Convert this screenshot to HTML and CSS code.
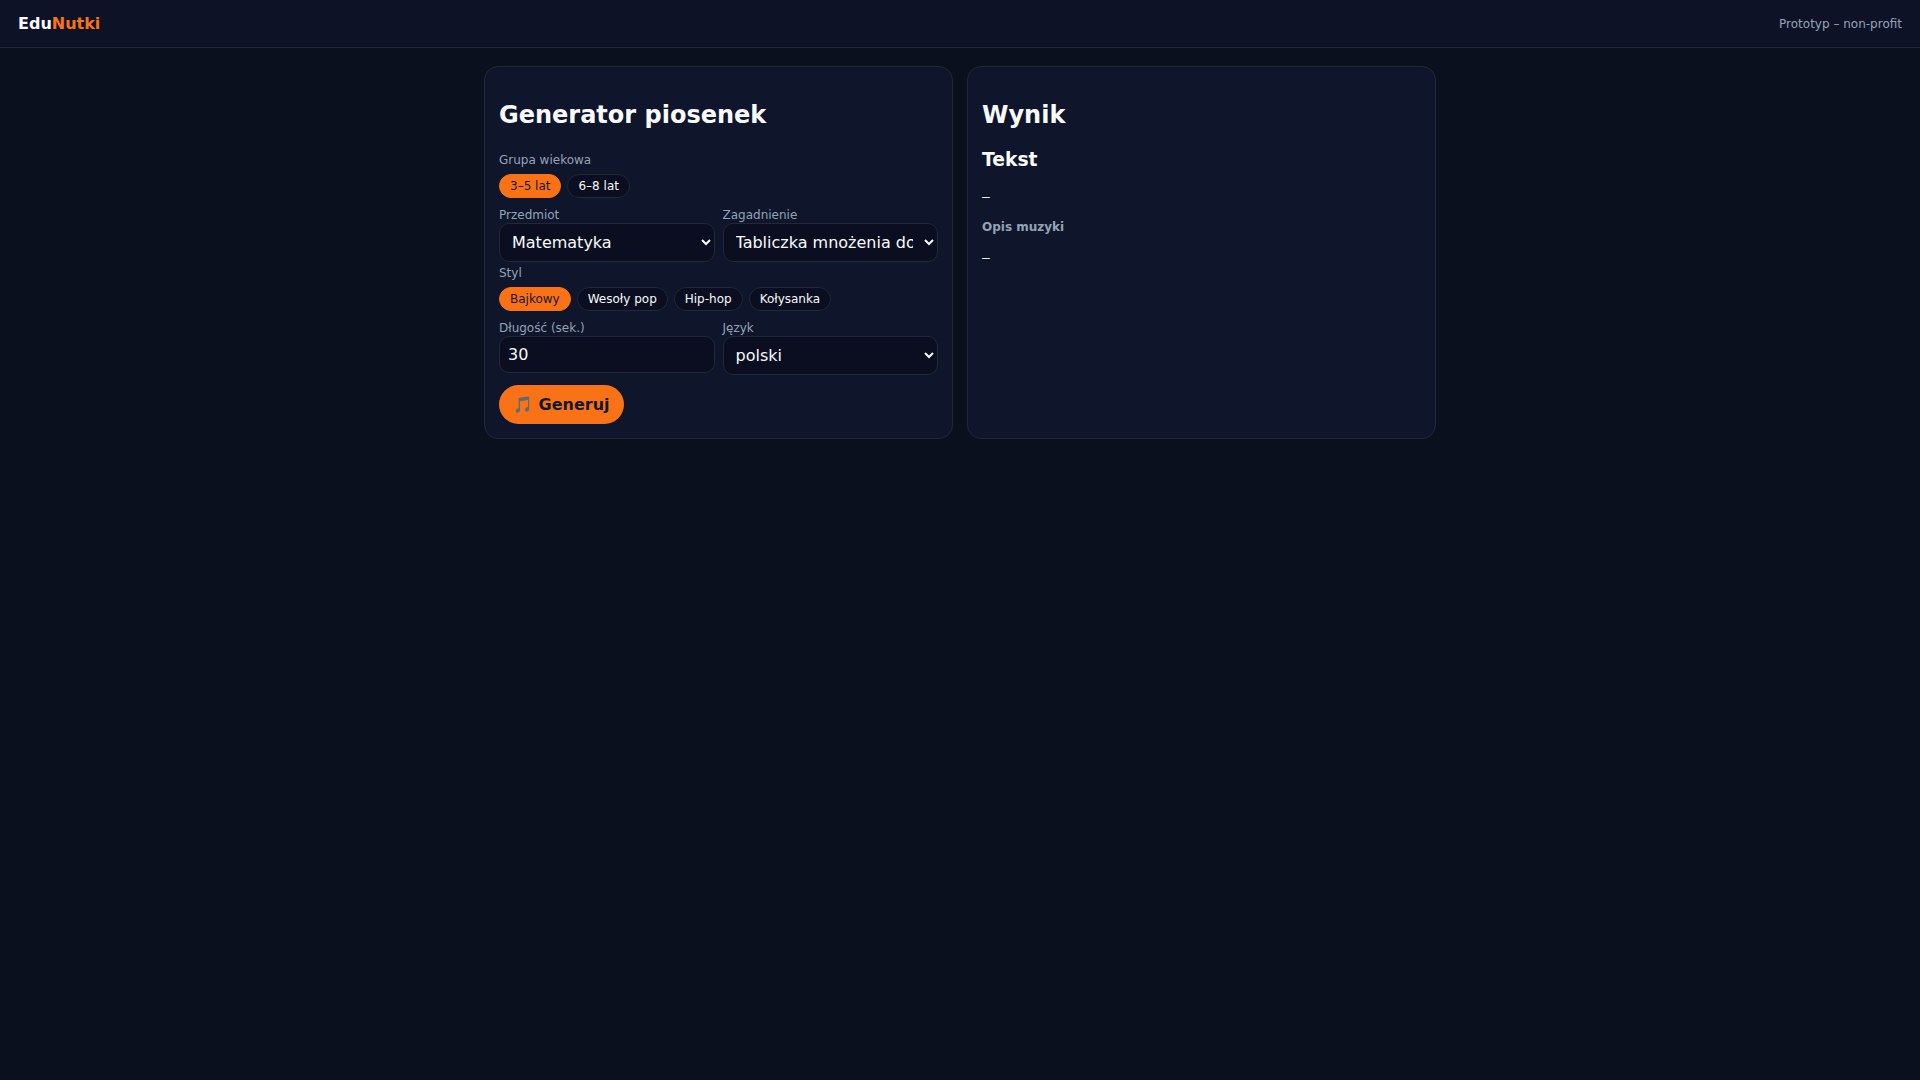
FILE: index.html
```html
<!DOCTYPE html>
<html lang="pl">
<head>
    <meta charset="UTF-8">
    <meta name="viewport" content="width=device-width, initial-scale=1.0">
    <title>EduNutki</title>
    <link rel="stylesheet" href="styles.css">
</head>
<body>
    <header>
        <div class="brand">Edu<span>Nutki</span></div>
        <div class="small">Prototyp – non-profit</div>
    </header>

    <main>
        <section class="card">
            <h2>Generator piosenek</h2>

            <div><span class="small" id="ageLabel">Grupa wiekowa</span></div>
            <div class="chips" id="age" role="group" aria-labelledby="ageLabel">
                <button type="button" class="chip active">3–5 lat</button>
                <button type="button" class="chip">6–8 lat</button>
            </div>

            <div class="row">
                <div class="field">
                    <label class="small" for="subject">Przedmiot</label>
                    <select id="subject">
                        <option>Matematyka</option>
                        <option>Przyroda</option>
                    </select>
                </div>
                <div class="field">
                    <label class="small" for="topic">Zagadnienie</label>
                    <select id="topic">
                        <option>Tabliczka mnożenia do 100</option>
                        <option>Dodawanie do 20</option>
                    </select>
                </div>
            </div>

            <div><span class="small" id="styleLabel">Styl</span></div>
            <div class="chips" id="style" role="group" aria-labelledby="styleLabel">
                <button type="button" class="chip active">Bajkowy</button>
                <button type="button" class="chip">Wesoły pop</button>
                <button type="button" class="chip">Hip-hop</button>
                <button type="button" class="chip">Kołysanka</button>
            </div>

            <div class="row">
                <div class="field">
                    <label class="small" for="length">Długość (sek.)</label>
                    <input type="number" id="length" value="30">
                </div>
                <div class="field">
                    <label class="small" for="lang">Język</label>
                    <select id="lang">
                        <option>polski</option>
                        <option>angielski</option>
                    </select>
                </div>
            </div>

            <button type="button" class="btn" id="generate">🎵 Generuj</button>
        </section>

        <section class="card">
            <h2>Wynik</h2>
            <h3>Tekst</h3>
            <pre id="lyrics">—</pre>
            <h4 class="small">Opis muzyki</h4>
            <pre id="music">—</pre>
        </section>
    </main>

    <script>
        // One active chip in each group
        document.querySelectorAll('.chips').forEach(group => {
            group.addEventListener('click', e => {
                if (!e.target.classList.contains('chip')) return;
                group.querySelectorAll('.chip').forEach(c => c.classList.remove('active'));
                e.target.classList.add('active');
            });
        });
    </script>
</body>
</html>
```
FILE: styles.css
```css
:root {
    --bg: #0a101e;
    --card: #0f152a;
    --field: #0a0e20;
    --line: #1f2937;
    --text: #f8fafc;
    --muted: #94a3b8;
    --accent: #f97316;
}

* {
    box-sizing: border-box;
}

body {
    margin: 0;
    font-family: "DejaVu Sans", sans-serif;
    background: var(--bg);
    color: var(--text);
}

header {
    display: flex;
    justify-content: space-between;
    align-items: center;
    padding: 14px 18px;
    background: #0d1227;
    border-bottom: 1px solid #22263b;
}

.brand {
    font-weight: 700;
}

.brand span {
    color: var(--accent);
}

.small {
    font-size: 12px;
    color: var(--muted);
}

main {
    display: grid;
    grid-template-columns: 1fr 1fr;
    gap: 14px;
    max-width: 980px;
    margin: 0 auto;
    padding: 18px 14px;
}

.card {
    background: var(--card);
    border: 1px solid var(--line);
    border-radius: 14px;
    padding: 14px;
}

h2 {
    margin: 20px 0;
}

.chips {
    display: flex;
    flex-wrap: wrap;
    gap: 6px;
    margin: 6px 0;
}

.chip {
    padding: 4px 10px;
    border: 1px solid var(--line);
    border-radius: 999px;
    background: var(--field);
    color: var(--text);
    font: inherit;
    font-size: 12px;
    cursor: pointer;
}

.chip.active {
    background: var(--accent);
    border-color: var(--accent);
    color: #111827;
}

.row {
    display: flex;
    gap: 8px;
}

.field {
    flex: 1;
    min-width: 0;
}

input,
select {
    display: block;
    width: 100%;
    padding: 8px;
    border: 1px solid var(--line);
    border-radius: 10px;
    background: var(--field);
    color: var(--text);
    font: inherit;
}

.btn {
    margin-top: 10px;
    padding: 10px 14px;
    border: none;
    border-radius: 999px;
    background: var(--accent);
    color: #111827;
    font: inherit;
    font-weight: 700;
    cursor: pointer;
}

pre {
    font-family: "DejaVu Sans Mono", monospace;
    font-size: 13px;
    white-space: pre-wrap;
}
```
